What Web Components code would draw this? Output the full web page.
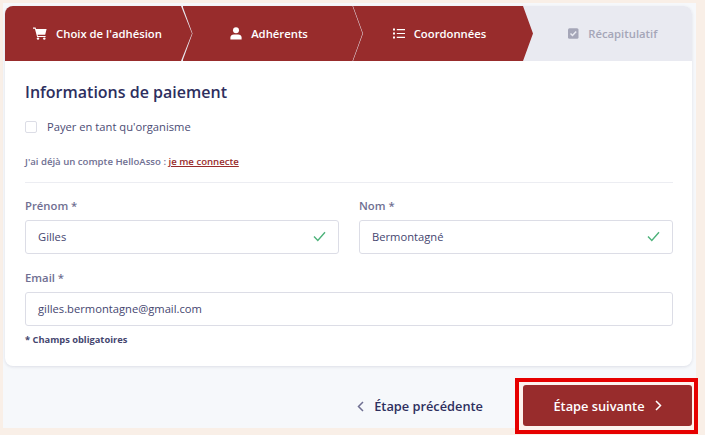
<!DOCTYPE html>
<html lang="fr">
<head>
<meta charset="utf-8">
<title>Coordonnées</title>
<style>
  html, body { margin: 0; height: 100%; }
  body { background: #f9efe7; font-family: "Open Sans", sans-serif; color: #2e2f5e; overflow: hidden; }
</style>
</head>
<body>
<checkout-page>
  <step-bar slot="steps"></step-bar>
  <payment-form slot="form"></payment-form>
  <step-footer slot="footer"></step-footer>
</checkout-page>

<script>
/* outer frame : pale panel holding the card and the footer */
class CheckoutPage extends HTMLElement {
  constructor() {
    super();
    this.attachShadow({ mode: 'open' });
    this.shadowRoot.innerHTML = `
      <style>
        :host { display: block; width: 693px; height: 425px; box-sizing: border-box; padding-top: 3px; margin: 3px 0 0 3px; background: #f6f8fb; }
        .card { margin: 0 4px 0 2px; background: #fff; border-radius: 8px; overflow: hidden;
                box-shadow: 0 1px 3px rgba(46,47,94,.12); }
      </style>
      <div class="card"><slot name="steps"></slot><slot name="form"></slot></div>
      <slot name="footer"></slot>
    `;
  }
}
customElements.define('checkout-page', CheckoutPage);

const STEP_ICONS = {
  cart: '<svg width="14" height="13" viewBox="0 0 14 13"><path fill="currentColor" d="M0 .6h2.6l.4 1.5h10.6l-1.4 5.6H4.6l.3 1.2h7.700v1H4.100L1.900 1.700H0z"/><circle fill="currentColor" cx="5" cy="11.600" r="1.200"/><circle fill="currentColor" cx="11.300" cy="11.600" r="1.200"/></svg>',
  user: '<svg width="12" height="13" viewBox="0 0 12 13"><circle fill="currentColor" cx="6" cy="3.300" r="3"/><path fill="currentColor" d="M.4 12.600v-2C.4 8.600 2 7.400 3.800 7.400h4.400c1.800 0 3.400 1.200 3.400 3.200v2z"/></svg>',
  list: '<svg width="12" height="11" viewBox="0 0 12 11"><path fill="currentColor" d="M0 .6h2v2H0zM0 4.500h2v2H0zM0 8.400h2v2H0zM3.800 1h8.200v1.200H3.800zM3.800 4.900h8.200v1.200H3.800zM3.800 8.800h8.200V10H3.800z"/></svg>',
  check: '<svg width="11" height="11" viewBox="0 0 11 11"><rect fill="currentColor" width="10.500" height="10.500" y=".2" rx="1.500"/><path fill="none" stroke="#e9eaf1" stroke-width="1.500" d="M2.500 5.500l2 2 3.700-4"/></svg>'
};

class StepItem extends HTMLElement {
  constructor() {
    super();
    this.attachShadow({ mode: 'open' });
  }

  connectedCallback() {
    const icon = STEP_ICONS[this.getAttribute('icon')] || '';
    this.shadowRoot.innerHTML = `
      <style>
        :host { display: flex; align-items: center; justify-content: center; gap: 9px; height: 55px;
                font-size: 11.300px; font-weight: 600; color: #fff; background: #982c2c; box-sizing: border-box; }
        :host([muted]) { background: transparent; color: #a5a6b8; }
        svg { display: block; flex: none; }
      </style>
      ${icon}<span><slot></slot></span>
    `;
  }
}
customElements.define('step-item', StepItem);

class StepBar extends HTMLElement {
  constructor() {
    super();
    this.attachShadow({ mode: 'open' });
    this.shadowRoot.innerHTML = `
      <style>
        :host { display: block; background: #e9eaf1; }
        .steps { display: flex; }
        step-item { margin-right: -9.500px; }
        .first { width: 187px; padding-right: 2px; clip-path: polygon(0 0, 176px 0, 187px 27.500px, 176px 55px, 0 55px); }
        .mid { width: 180px; padding-right: 7px; clip-path: polygon(0 0, 170px 0, 180px 27.500px, 170px 55px, 0 55px, 10px 27.500px); }
        .last { flex: 1; padding-left: 10px; margin-right: 0; }
      </style>
      <div class="steps">
        <step-item class="first" icon="cart">Choix de l'adhésion</step-item>
        <step-item class="mid" icon="user">Adhérents</step-item>
        <step-item class="mid" icon="list">Coordonnées</step-item>
        <step-item class="last" icon="check" muted>Récapitulatif</step-item>
      </div>
    `;
  }
}
customElements.define('step-bar', StepBar);

class FormField extends HTMLElement {
  constructor() {
    super();
    this.attachShadow({ mode: 'open' });
  }

  connectedCallback() {
    const valid = this.hasAttribute('valid');
    this.shadowRoot.innerHTML = `
      <style>
        :host { display: block; }
        label { display: block; font-size: 11.300px; line-height: 17px; font-weight: 600; color: #6f6f92; margin-bottom: 6px; }
        .box { display: flex; align-items: center; justify-content: space-between; height: 34px; box-sizing: border-box;
               padding: 0 12px 2px; border: 1px solid #dcdde6; border-radius: 3px; font-size: 11.200px; color: #45466f; }
        svg { display: block; }
      </style>
      <label>${this.getAttribute('label')}</label>
      <div class="box"><span><slot></slot></span>
        ${valid ? '<svg width="13" height="11" viewBox="0 0 13 11"><path fill="none" stroke="#4db27a" stroke-width="1.400" d="M1 5.500l3.800 4L12 1.200"/></svg>' : ''}
      </div>
    `;
  }
}
customElements.define('form-field', FormField);

class PaymentForm extends HTMLElement {
  constructor() {
    super();
    this.attachShadow({ mode: 'open' });
    this.shadowRoot.innerHTML = `
      <style>
        :host { display: block; padding: 20px 19px 19px 20px; height: 305px; box-sizing: border-box; }
        h2 { margin: 0 0 16px; font-size: 16px; line-height: 22px; font-weight: 600; color: #2e2f5e; }
        .check { display: flex; align-items: center; gap: 10px; font-size: 11.200px; line-height: 16px; color: #4b4c74; }
        .check i { width: 10px; height: 10px; border: 1px solid #dcdde6; border-radius: 2px; flex: none; }
        .login { margin: 21px 0 14px; font-size: 9.600px; line-height: 12px; font-weight: 600; color: #6f6f92; }
        .login a { color: #982c2c; text-decoration: underline; }
        hr { border: 0; border-top: 1px solid #ecedf2; margin: 0 0 14px; }
        .row { display: grid; grid-template-columns: 314px 314px; column-gap: 20px; margin-bottom: 15px; }
        .note { margin: 8px 0 0; font-size: 9.300px; line-height: 12px; font-weight: 700; color: #45466f; }
      </style>
      <h2>Informations de paiement</h2>
      <div class="check"><i></i><span>Payer en tant qu'organisme</span></div>
      <p class="login">J'ai déjà un compte HelloAsso : <a href="#">je me connecte</a></p>
      <hr>
      <div class="row">
        <form-field label="Prénom *" valid>Gilles</form-field>
        <form-field label="Nom *" valid>Bermontagné</form-field>
      </div>
      <form-field label="Email *">gilles.bermontagne@gmail.com</form-field>
      <p class="note">* Champs obligatoires</p>
    `;
  }
}
customElements.define('payment-form', PaymentForm);

class StepFooter extends HTMLElement {
  constructor() {
    super();
    this.attachShadow({ mode: 'open' });
    this.shadowRoot.innerHTML = `
      <style>
        :host { display: flex; justify-content: flex-end; align-items: center; gap: 32px; padding-top: 12px; }
        .prev, .next { display: flex; align-items: center; font-size: 12.800px; font-weight: 600; }
        .prev { gap: 10px; color: #2e2f5e; }
        .mark { border: 4px solid #e60000; padding: 3px 2px 4px 4px; background: #fdf3ee; margin-right: -2px; }
        .next { justify-content: center; gap: 10px; width: 169px; height: 41px; background: #982c2c; color: #fff; border-radius: 3px; }
        svg { display: block; }
      </style>
      <div class="prev">
        <svg width="7" height="11" viewBox="0 0 7 11"><path fill="none" stroke="#6f6f92" stroke-width="1.500" d="M6 1L1.500 5.500 6 10"/></svg>
        <span>Étape précédente</span>
      </div>
      <div class="mark">
        <div class="next"><span>Étape suivante</span>
          <svg width="7" height="11" viewBox="0 0 7 11"><path fill="none" stroke="#fff" stroke-width="1.500" d="M1 1l4.500 4.500L1 10"/></svg>
        </div>
      </div>
    `;
  }
}
customElements.define('step-footer', StepFooter);
</script>
</body>
</html>
